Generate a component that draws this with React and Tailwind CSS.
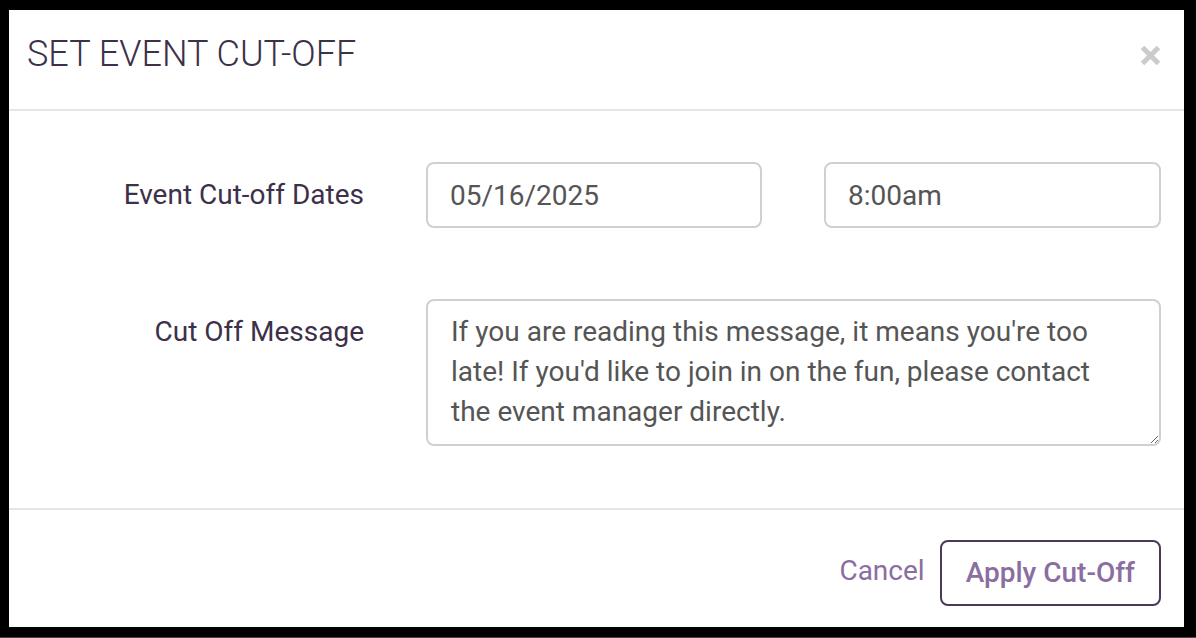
import React from 'react';

const font = { fontFamily: 'Roboto, "Liberation Sans", sans-serif' };

function CloseIcon() {
    return (
        <svg width="21" height="21" viewBox="0 0 21 21" aria-hidden="true">
            <path d="M2.5 2.5 L18.5 18.5 M18.5 2.5 L2.5 18.5" stroke="#cbcbcb" strokeWidth="5" />
        </svg>
    );
}

export default function App() {
    return (
        <div
            className="w-[1196px] h-[638px] bg-black pt-[10px] pl-[9px] pr-[12px] pb-[10px] border-b border-[#4a4a4a]"
            style={font}
        >
            <div className="flex h-full flex-col bg-white">
                {/* header */}
                <div className="flex h-[101px] shrink-0 items-start justify-between border-b-2 border-[#e5e5e5] pl-[18px] pr-[23px] pt-[26px]">
                    <h1 className="text-[36px] leading-[36px] font-light text-[#3d3049]">
                        SET EVENT CUT-OFF
                    </h1>
                    <button className="mt-[9px]" aria-label="Close">
                        <CloseIcon />
                    </button>
                </div>

                {/* body */}
                <div className="flex h-[399px] shrink-0 flex-col gap-[71px] border-b-2 border-[#e5e5e5] pl-[18px] pr-[23px] pt-[51px]">
                    <div className="flex items-center">
                        <label className="w-[337px] shrink-0 text-right text-[28px] leading-[40px] text-[#3d3049]">
                            Event Cut-off Dates
                        </label>
                        <div className="ml-[62px] flex min-w-0 flex-1 gap-[62px]">
                            <input
                                defaultValue="05/16/2025"
                                className="h-[66px] w-[336px] min-w-0 shrink-0 rounded-[8px] border-2 border-[#d0d0d0] px-[22px] text-[28px] text-[#555] outline-none"
                                style={font}
                            />
                            <input
                                defaultValue="8:00am"
                                className="h-[66px] min-w-0 flex-1 rounded-[8px] border-2 border-[#d0d0d0] px-[22px] text-[28px] text-[#555] outline-none"
                                style={font}
                            />
                        </div>
                    </div>
                    <div className="flex items-start">
                        <label className="mt-[13px] w-[337px] shrink-0 text-right text-[28px] leading-[40px] text-[#3d3049]">
                            Cut Off Message
                        </label>
                        <textarea
                            defaultValue="If you are reading this message, it means you're too late! If you'd like to join in on the fun, please contact the event manager directly."
                            className="ml-[62px] h-[147px] min-w-0 flex-1 rounded-[8px] border-2 border-[#d0d0d0] pl-[23px] pr-[40px] pt-[11px] text-[28px] leading-[40px] text-[#555] outline-none"
                            style={font}
                        />
                    </div>
                </div>

                {/* footer */}
                <div className="flex flex-1 items-start justify-end gap-[15px] pr-[23px] pt-[30px]">
                    <button className="mt-[11px] text-[28px] leading-[40px] text-[#8b6ea1]" style={font}>
                        Cancel
                    </button>
                    <button
                        className="h-[66px] rounded-[8px] border-2 border-[#4a3a59] px-[24px] text-[28px] font-medium text-[#8b6ea1]"
                        style={font}
                    >
                        Apply Cut-Off
                    </button>
                </div>
            </div>
        </div>
    );
}
